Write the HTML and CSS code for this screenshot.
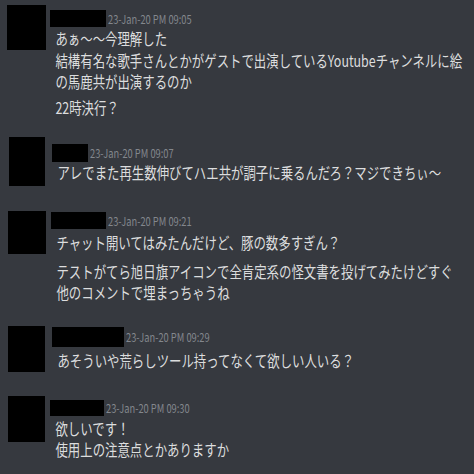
FILE: index.html
```html
<!DOCTYPE html>
<html lang="ja">
<head>
    <meta charset="UTF-8">
    <meta name="viewport" content="width=device-width, initial-scale=1.0">
    <title>Chat log</title>
    <link rel="stylesheet" href="styles.css">
</head>
<body>

    <main class="chat">

        <div class="msg m1">
            <div class="avatar"></div>
            <div class="body">
                <div class="head">
                    <span class="name"></span>
                    <span class="time">23-Jan-20 PM 09:05</span>
                </div>
                <p class="text">あぁ〜〜今理解した<br>結構有名な歌手さんとかがゲストで出演しているYoutubeチャンネルに絵<br>の馬鹿共が出演するのか</p>
                <p class="text">22時決行？</p>
            </div>
        </div>

        <div class="msg m2">
            <div class="avatar"></div>
            <div class="body">
                <div class="head">
                    <span class="name"></span>
                    <span class="time">23-Jan-20 PM 09:07</span>
                </div>
                <p class="text">アレでまた再生数伸びてハエ共が調子に乗るんだろ？マジできちぃ〜</p>
            </div>
        </div>

        <div class="msg m3">
            <div class="avatar"></div>
            <div class="body">
                <div class="head">
                    <span class="name"></span>
                    <span class="time">23-Jan-20 PM 09:21</span>
                </div>
                <p class="text">チャット開いてはみたんだけど、豚の数多すぎん？</p>
                <p class="text">テストがてら旭日旗アイコンで全肯定系の怪文書を投げてみたけどすぐ<br>他のコメントで埋まっちゃうね</p>
            </div>
        </div>

        <div class="msg m4">
            <div class="avatar"></div>
            <div class="body">
                <div class="head">
                    <span class="name"></span>
                    <span class="time">23-Jan-20 PM 09:29</span>
                </div>
                <p class="text">あそういや荒らしツール持ってなくて欲しい人いる？</p>
            </div>
        </div>

        <div class="msg m5">
            <div class="avatar"></div>
            <div class="body">
                <div class="head">
                    <span class="name"></span>
                    <span class="time">23-Jan-20 PM 09:30</span>
                </div>
                <p class="text">欲しいです！<br>使用上の注意点とかありますか</p>
            </div>
        </div>

    </main>

</body>
</html>
```

FILE: styles.css
```css
html, body {
    height: 100%;
}
body {
    margin: 0;
    background-color: #36393f;
    color: #dcddde;
    font-family: "Noto Sans CJK JP", "Noto Sans", sans-serif;
    overflow: hidden;
}
.chat {
    display: flex;
    flex-direction: column;
    padding-top: 5px;
}
.msg {
    display: flex;
    align-items: flex-start;
}
.avatar {
    flex: none;
    background-color: #000;
}
.body {
    flex: 1;
    min-width: 0;
    display: flex;
    flex-direction: column;
}
.head {
    display: flex;
    align-items: center;
}
.name {
    display: block;
    flex: none;
    background-color: #000;
}
.time {
    display: inline-block;
    margin-left: 2px;
    font-size: 12px;
    line-height: 14px;
    color: #83878d;
    white-space: nowrap;
    transform: scaleX(0.775);
    transform-origin: 0 50%;
}
.text {
    margin: 0;
    padding-left: 7px;
    font-size: 16px;
    line-height: 21.5px;
    white-space: nowrap;
    transform: scaleX(0.775);
    transform-origin: 0 0;
}
.text + .text {
    margin-top: 4px;
}

/* redaction boxes differ per message */
.m1 .avatar { width: 39px; height: 45px; margin-left: 7px; }
.m1 .body { margin-left: 4px; padding-top: 5px; }
.m1 .name { width: 56px; height: 17px; }
.m1 .head { margin-bottom: 1px; }

.m2 { margin-top: 19px; }
.m2 .avatar { width: 36px; height: 49px; margin-left: 9px; }
.m2 .body { margin-left: 7px; padding-top: 7px; }
.m2 .name { width: 36px; height: 18px; }
.m2 .head { margin-bottom: 0; }

.m3 { margin-top: 25px; }
.m3 .avatar { width: 38px; height: 43px; margin-left: 8px; }
.m3 .body { margin-left: 5px; padding-top: 1px; }
.m3 .name { width: 55px; height: 17px; }
.m3 .head { margin-bottom: 3px; }
.m3 .text + .text { margin-top: 7px; }

.m4 { margin-top: 22px; }
.m4 .avatar { width: 37px; height: 46px; margin-left: 8px; }
.m4 .body { margin-left: 7px; padding-top: 1px; }
.m4 .name { width: 72px; height: 20px; }
.m4 .head { margin-bottom: 3px; }

.m5 { margin-top: 24px; }
.m5 .avatar { width: 37px; height: 46px; margin-left: 8px; }
.m5 .body { margin-left: 5px; padding-top: 4px; }
.m5 .name { width: 54px; height: 16px; }
.m5 .head { margin-bottom: 2px; }
```
